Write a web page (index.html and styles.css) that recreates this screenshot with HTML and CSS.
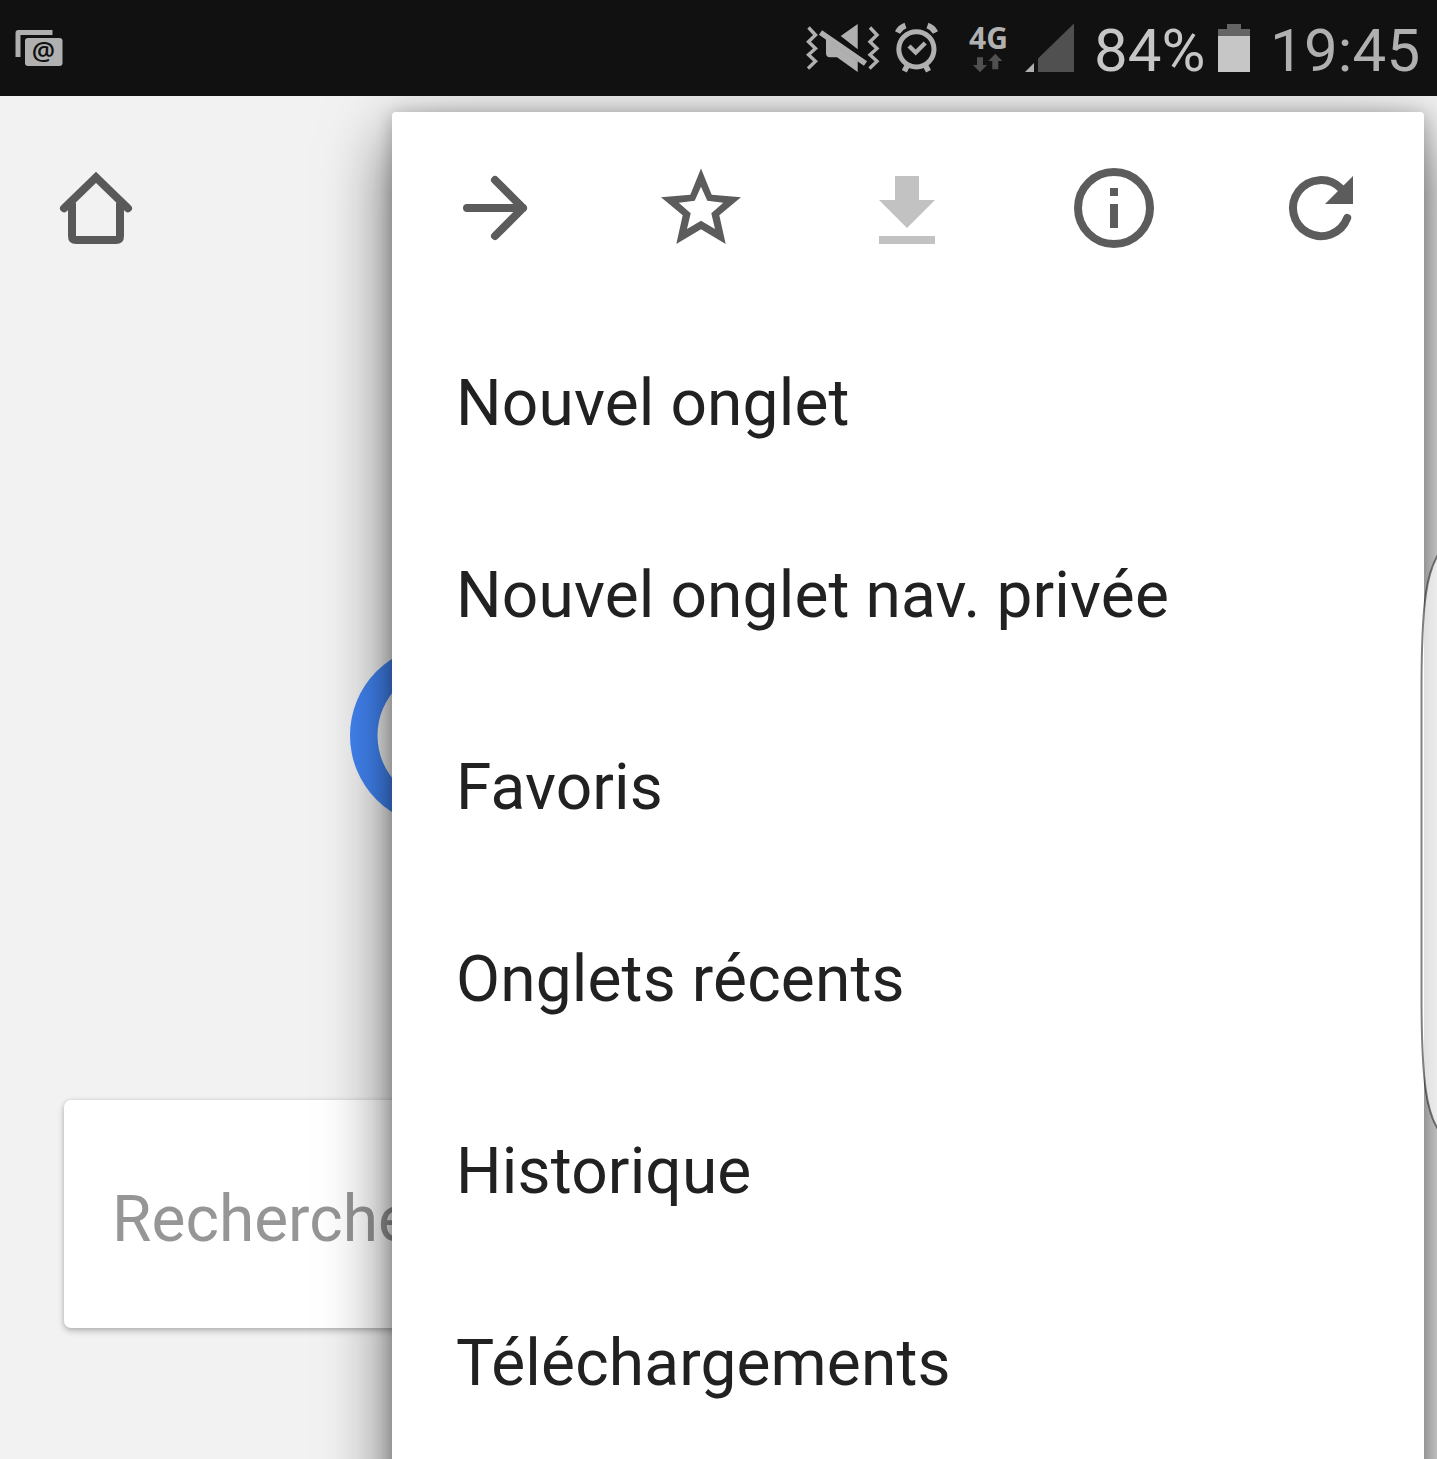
FILE: index.html
```html
<!DOCTYPE html>
<html lang="fr">
<head>
<meta charset="utf-8">
<title>Nouvel onglet</title>
<link rel="stylesheet" href="styles.css">
</head>
<body>
<div class="screen">
  <header class="status">
    <svg class="notif" viewBox="0 0 80 96">
      <path d="M15.500 57V33q0-3 3-3H52.500v5H20.500V57z"/>
      <rect x="25" y="38" width="37.500" height="28" rx="3"/>
      <text class="at" x="31.700" y="60">@</text>
    </svg>
    <div class="indicators">
      <svg class="sound" viewBox="800 0 160 96">
        <g class="line">
          <path d="M808.500 27.500l7 7.500-7 6.700 7 6.700-7 6.300 7 6.600-7.500 7.200M870 27.500l7 7.500-7 6.700 7 6.700-7 6.300 7 6.600-7.500 7.200"/>
          <path class="slash" d="M820.500 32.500L865.500 63.500"/>
          <circle class="ring" cx="916.400" cy="49.300" r="17.600"/>
          <path class="tick" d="M909 46l6.700 6.500 9.500-9.500"/>
          <path class="bell" d="M897.500 32.500q2.500-5 8-7M935.500 32.500q-2.500-5-8-7M907.300 65.500l-3 5.700M925.500 65.500l3 5.700"/>
        </g>
        <path d="M840.700 36L857.700 24V49.300zM826 39L857.700 61V72L837 57.300H830q-4 0-4-4z"/>
      </svg>
      <div class="network">
        <span class="type">4G</span>
        <svg class="traffic" viewBox="973 53 30 20"><path d="M977 57.300h6V65h4l-7 7.300-7-7.300h4zM992.300 69.300h6V61h4l-7-7.300-7 7.300h4z"/></svg>
      </div>
      <svg class="signal" viewBox="1025 23 50 50">
        <path class="weak" d="M1038 58.500L1074 23.500V72H1038z"/>
        <path d="M1025 72L1034 63V72z"/>
      </svg>
      <span class="percent">84%</span>
      <svg class="battery" viewBox="1218 24 32 48">
        <path class="empty" d="M1227 24h14v5h9v7h-32v-7h9z"/>
        <path class="full" d="M1218 36h32v36h-32z"/>
      </svg>
      <span class="clock">19:45</span>
    </div>
  </header>
  <div class="content">
    <main class="page">
      <svg class="home" viewBox="48 160 96 96">
        <path d="M64 208.300L96 177.300 128 208.300M72 204V236q0 4 4 4h40q4 0 4-4V204"/>
      </svg>
      <svg class="logo" viewBox="350 640 182 190">
        <path fill-rule="evenodd" d="M350 735.500a90.700 90.700 0 1 1 181.400 0a90.700 90.700 0 1 1-181.400 0zM377.500 735.500a69 69 0 1 0 138 0a69 69 0 1 0-138 0z"/>
      </svg>
      <div class="search">Recherche</div>
    </main>
    <nav class="menu">
      <div class="actions">
        <svg viewBox="447 160 96 96"><path class="stroke" d="M467 208H523M495 180l28 28-28 28"/></svg>
        <svg viewBox="653 160 96 96"><path fill-rule="evenodd" d="M701 168.500L711.700 194.700 741 197.300 719.300 215.300 725.700 244 701 229.300 676.300 244 682.700 215.300 661 197.300 690.300 194.700zM701 186.700L694.700 200.700 678.700 202.700 690.700 213.300 687 229 701 220.700 715 229 711.300 213.300 723.300 202.700 707.300 200.700z"/></svg>
        <svg class="disabled" viewBox="859 160 96 96"><path d="M895 176h24v24h16l-28 28-28-28h16zM879 236h56v8h-56z"/></svg>
        <svg viewBox="1066 160 96 96"><circle class="stroke" cx="1114" cy="208" r="36"/><path d="M1110 188h8v8h-8zM1110 204h8v24h-8z"/></svg>
        <svg viewBox="1273 160 96 96"><path class="stroke" d="M1347.200 218A28 28 0 1 1 1341 188.500"/><path d="M1353 176V204H1325z"/></svg>
      </div>
      <ul class="items">
        <li>Nouvel onglet</li>
        <li>Nouvel onglet nav. privée</li>
        <li>Favoris</li>
        <li>Onglets récents</li>
        <li>Historique</li>
        <li>Téléchargements</li>
      </ul>
    </nav>
    <svg class="edge" viewBox="1417 540 20 605">
      <path d="M1440 552C1427 570 1421.500 600 1421.500 690V995C1421.500 1085 1427 1115 1440 1132"/>
    </svg>
  </div>
</div>
</body>
</html>
```

FILE: styles.css
```css
body {
  margin: 0;
  font-family: Roboto, sans-serif;
}

svg {
  display: block;
  flex: none;
}

.screen {
  display: flex;
  flex-direction: column;
  width: 1437px;
  height: 1459px;
  overflow: hidden;
}

.status {
  display: flex;
  justify-content: space-between;
  flex: none;
  height: 96px;
  background: #111;
  color: #b0b0b0;
  fill: #b0b0b0;
  font-size: 60px;
  line-height: 70px;
}

.notif {
  width: 80px;
  height: 96px;
}

.at {
  fill: #111;
  font: 600 26px "Open Sans", sans-serif;
}

.indicators {
  display: flex;
  padding-right: 15px;
}

.sound {
  width: 160px;
  height: 96px;
}

.line {
  fill: none;
  stroke: #b0b0b0;
  stroke-width: 3.4;
}

.ring {
  stroke-width: 5;
}

.slash,
.bell {
  stroke-width: 5.6;
}

.tick {
  stroke-width: 4.4;
}

.network {
  display: flex;
  flex-direction: column;
  width: 56px;
  margin-left: 9px;
  padding-top: 23px;
}

.type {
  height: 30px;
  font: bold 30px/30px "Open Sans", sans-serif;
}

.traffic {
  width: 30px;
  height: 20px;
  margin-left: 4px;
  fill: #505050;
}

.signal {
  width: 50px;
  height: 50px;
  margin-top: 23px;
}

.weak {
  fill: #505050;
}

.percent {
  width: 124px;
  margin: 16px 0 0 19px;
  color: #c6c6c6;
}

.battery {
  width: 32px;
  height: 48px;
  margin-top: 24px;
}

.empty {
  fill: #646464;
}

.full {
  fill: #c6c6c6;
}

.clock {
  width: 152px;
  margin: 16px 0 0 20px;
  letter-spacing: .2px;
  white-space: nowrap;
}

.content {
  position: relative;
  flex: 1;
  overflow: hidden;
  background: #f2f2f2;
}

.page {
  display: flex;
  flex-direction: column;
  padding: 64px 48px 0;
}

.home {
  width: 96px;
  height: 96px;
  fill: none;
  stroke: #595959;
  stroke-width: 8;
  stroke-linecap: round;
}

.logo {
  width: 182px;
  height: 190px;
  margin: 384px 0 0 302px;
  fill: #4285f4;
}

.search {
  height: 218px;
  margin: 270px 16px 0;
  padding: 10px 0 0 48px;
  border-radius: 7px;
  background: #fff;
  box-shadow: 0 3px 6px rgba(0, 0, 0, .24), 0 0 4px rgba(0, 0, 0, .1);
  color: #969696;
  font-size: 64px;
  line-height: 220px;
}

.menu {
  position: absolute;
  top: 16px;
  left: 392px;
  width: 1032px;
  height: 1600px;
  border-radius: 4px;
  background: #fff;
  box-shadow: 0 26px 68px rgba(0, 0, 0, .6), 0 2px 18px rgba(0, 0, 0, .24);
}

.actions {
  display: grid;
  grid-template-columns: 206px 206px 206px 208px 206px;
  place-items: center;
  height: 192px;
  fill: #5c5c5c;
}

.actions svg {
  width: 96px;
  height: 96px;
}

.stroke {
  fill: none;
  stroke: #5c5c5c;
  stroke-width: 8;
  stroke-linecap: round;
  stroke-linejoin: round;
}

.actions .disabled {
  fill: #c2c2c2;
}

.items {
  margin: 0;
  padding: 4px 64px 0;
  list-style: none;
  color: #212121;
  font-size: 64px;
  line-height: 192px;
  letter-spacing: .15px;
}

.edge {
  position: absolute;
  top: 444px;
  right: 0;
  width: 20px;
  height: 605px;
  fill: rgba(255, 255, 255, .7);
  stroke: rgba(0, 0, 0, .5);
  stroke-width: 2;
}
```
